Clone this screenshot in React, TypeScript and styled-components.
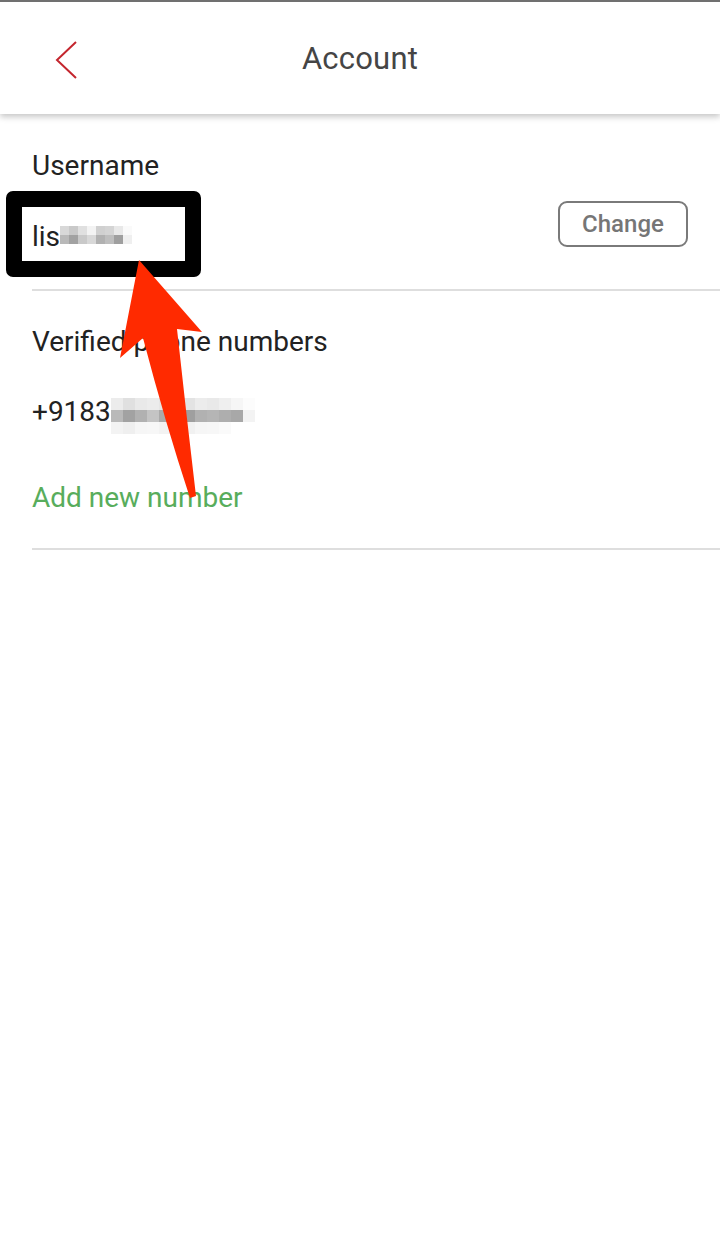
import React from "react";
import styled, { createGlobalStyle } from "styled-components";

const GlobalStyle = createGlobalStyle`
  html, body {
    margin: 0;
    padding: 0;
    background: #fff;
  }
  body {
    font-family: Roboto, "Noto Sans", sans-serif;
  }
`;

const Page = styled.div`
  position: relative;
  width: 720px;
  min-height: 1234px;
  background: #fff;
  border-top: 2px solid #707070;
  box-sizing: border-box;
  overflow: hidden;
`;

const Header = styled.header`
  position: relative;
  height: 112px;
  display: flex;
  align-items: center;
  justify-content: center;
  background: #fff;
  box-shadow: 0 3px 6px rgba(0, 0, 0, 0.22);
  z-index: 1;
`;

const BackButton = styled.button`
  position: absolute;
  left: 48px;
  top: 34px;
  width: 36px;
  height: 48px;
  padding: 0;
  border: 0;
  background: none;
  display: flex;
  align-items: center;
  justify-content: center;
`;

const Title = styled.h1`
  margin: 0;
  font-size: 31px;
  font-weight: 400;
  color: #454545;
  letter-spacing: 0.2px;
`;

const Section = styled.section`
  padding-left: 32px;
`;

const Label = styled.div<{ $top: number }>`
  margin-top: ${(p) => p.$top}px;
  font-size: 28px;
  line-height: 32px;
  color: #222;
`;

const ValueRow = styled.div`
  display: flex;
  align-items: flex-start;
  justify-content: space-between;
  margin-top: 19px;
  padding-right: 32px;
`;

const Value = styled.div<{ $top: number }>`
  display: flex;
  align-items: flex-start;
  height: 32px;
  margin-top: ${(p) => p.$top}px;
  font-size: 28px;
  line-height: 32px;
  color: #222;
`;

const ChangeButton = styled.button`
  width: 130px;
  height: 46px;
  border: 2px solid #7a7a7a;
  border-radius: 9px;
  background: #fff;
  color: #767676;
  font-family: Roboto, sans-serif;
  font-size: 24px;
  font-weight: 500;
  padding: 0;
`;

const AddLink = styled.div`
  margin-top: 54px;
  font-size: 28px;
  line-height: 32px;
  color: #58ad5c;
`;

const Divider = styled.div<{ $top: number }>`
  margin-top: ${(p) => p.$top}px;
  height: 2px;
  background: #dedede;
`;

const MosaicGrid = styled.span<{ $cols: number; $cell: number }>`
  display: inline-grid;
  grid-template-columns: repeat(${(p) => p.$cols}, ${(p) => p.$cell}px);
  grid-auto-rows: ${(p) => p.$cell}px;
`;

const MosaicCell = styled.span<{ $shade: number }>`
  background: rgba(100, 100, 100, ${(p) => p.$shade});
`;

const Mosaic: React.FC<{ rows: number[][]; cell: number; offset: number }> = ({
  rows,
  cell,
  offset,
}) => (
  <MosaicGrid $cols={rows[0].length} $cell={cell} style={{ marginTop: offset }}>
    {rows.flat().map((s, i) => (
      <MosaicCell key={i} $shade={s} />
    ))}
  </MosaicGrid>
);

const HighlightBox = styled.div`
  position: absolute;
  left: 6px;
  top: 189px;
  width: 195px;
  height: 86px;
  box-sizing: border-box;
  border: 16px solid #000;
  border-radius: 7px;
  pointer-events: none;
`;

const ArrowLayer = styled.svg`
  position: absolute;
  left: 0;
  top: 0;
  pointer-events: none;
`;

const userBlur = [
  [0.25, 0.35, 0.2, 0.08, 0.3, 0.28, 0.15, 0.03],
  [0.45, 0.6, 0.35, 0.25, 0.5, 0.42, 0.62, 0.1],
];

const phoneBlur = [
  [0.12, 0.2, 0.14, 0.12, 0.16, 0.12, 0.18, 0.12, 0.14, 0.1, 0.06, 0.02],
  [0.45, 0.6, 0.5, 0.38, 0.55, 0.48, 0.62, 0.5, 0.48, 0.52, 0.56, 0.08],
  [0.08, 0.1, 0.06, 0.05, 0.08, 0.06, 0.09, 0.06, 0.05, 0.03, 0.0, 0.0],
];

export default function App() {
  return (
    <Page>
      <GlobalStyle />
      <Header>
        <BackButton aria-label="Back">
          <svg width="30" height="42" viewBox="0 0 30 42">
            <path
              d="M25 3 L6 21 L25 39"
              fill="none"
              stroke="#c4262e"
              strokeWidth="2"
            />
          </svg>
        </BackButton>
        <Title>Account</Title>
      </Header>

      <Section>
        <Label $top={36}>Username</Label>
        <ValueRow>
          <Value $top={20}>
            <span>lis</span>
            <Mosaic rows={userBlur} cell={9} offset={5} />
          </Value>
          <ChangeButton>Change</ChangeButton>
        </ValueRow>
        <Divider $top={36} />

        <Label $top={35}>Verified phone numbers</Label>
        <Value $top={38}>
          <span>+9183</span>
          <Mosaic rows={phoneBlur} cell={12} offset={2} />
        </Value>
        <AddLink>Add new number</AddLink>
        <Divider $top={34} />
      </Section>

      <HighlightBox />
      <ArrowLayer width="720" height="600" viewBox="0 0 720 600">
        <path
          d="M139 258 L202 330 L177 327 Q186 410 196 494 L190 496 Q165 420 143 336 L120 356 Z"
          fill="#ff2a00"
        />
      </ArrowLayer>
    </Page>
  );
}
